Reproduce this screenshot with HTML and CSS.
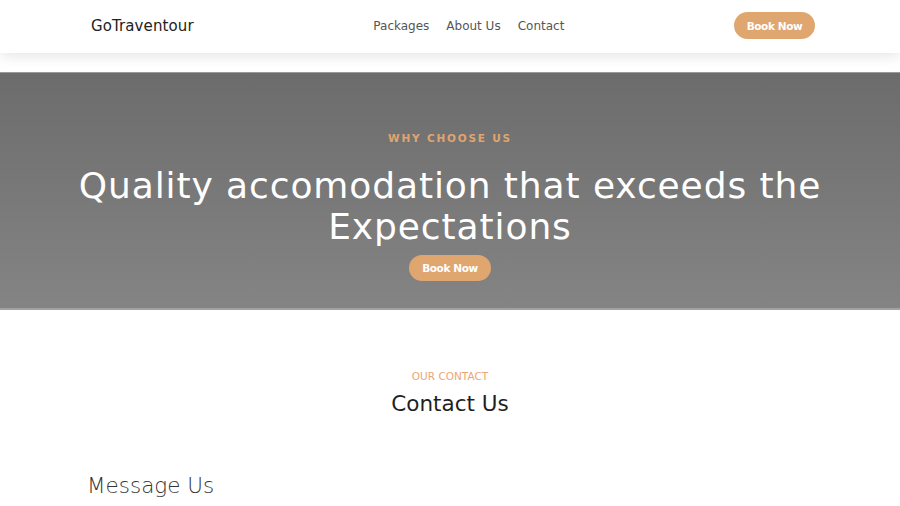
FILE: index.html
```html
<!DOCTYPE html>
<html lang="en">
<head>
<meta charset="utf-8">
<title>GoTraventour</title>
<link rel="stylesheet" href="styles.css">
</head>
<body>
<header class="site-header">
  <div class="container header-inner">
    <div class="logo">GoTraventour</div>
    <nav class="nav">
      <a href="#">Packages</a>
      <a href="#">About Us</a>
      <a href="#">Contact</a>
    </nav>
    <a class="btn btn-header" href="#">Book Now</a>
  </div>
</header>
<section class="hero">
  <p class="eyebrow">WHY CHOOSE US</p>
  <h1 class="hero-title">Quality accomodation that exceeds the<br>Expectations</h1>
  <a class="btn btn-hero" href="#">Book Now</a>
</section>
<section class="contact">
  <p class="contact-eyebrow">OUR CONTACT</p>
  <h2 class="contact-title">Contact Us</h2>
  <div class="container">
    <h3 class="message-title">Message Us</h3>
  </div>
</section>
</body>
</html>
```
FILE: styles.css
```css
* { box-sizing: border-box; }
html, body { margin: 0; padding: 0; }
body {
  font-family: "DejaVu Sans", "Open Sans", sans-serif;
  background: #fff;
  color: #222;
  overflow: hidden;
}
a { text-decoration: none; }
.container {
  width: 730px;
  margin: 0 auto;
  padding-left: 6px;
}
.site-header {
  height: 53px;
  background: #fff;
  box-shadow: 0 2px 14px rgba(0,0,0,0.12);
  position: relative;
  z-index: 2;
}
.header-inner {
  height: 51px;
  display: flex;
  align-items: center;
  justify-content: space-between;
}
.logo {
  font-size: 15px;
  font-weight: 500;
  color: #222;
  letter-spacing: 0.1px;
}
.nav {
  display: flex;
  gap: 17px;
  margin-left: 10px;
}
.nav a {
  font-size: 12px;
  color: #555;
}
.btn {
  display: inline-flex;
  align-items: center;
  justify-content: center;
  background: #e0a670;
  color: #fff;
  font-weight: 700;
  font-size: 10.5px;
  border-radius: 14px;
  letter-spacing: -0.4px;
}
.btn-header {
  width: 81px;
  height: 27px;
}
.hero {
  margin-top: 19px;
  height: 238px;
  background: linear-gradient(#6c6c6c, #848484);
  border-top: 1px solid #9a9a9a;
  border-bottom: 2px solid #a2a2a2;
  text-align: center;
  padding-top: 59px;
}
.eyebrow {
  margin: 0;
  font-size: 10.5px;
  font-weight: 600;
  letter-spacing: 1.8px;
  color: #e0a46e;
}
.hero-title {
  margin: 21px 0 0;
  font-size: 36px;
  font-weight: 400;
  line-height: 41px;
  color: #fff;
  letter-spacing: 0.9px;
}
.btn-hero {
  margin-top: 8px;
  width: 82px;
  height: 26px;
}
.contact {
  text-align: center;
  padding-top: 60px;
}
.contact-eyebrow {
  margin: 0;
  font-size: 10.5px;
  color: #eba676;
  font-weight: 500;
}
.contact-title {
  margin: 9px 0 0;
  font-size: 21.5px;
  font-weight: 400;
  color: #1f1f1f;
}
.message-title {
  margin: 57px 0 0 -4px;
  text-align: left;
  font-size: 21.5px;
  font-weight: 300;
  color: #333;
}
```
